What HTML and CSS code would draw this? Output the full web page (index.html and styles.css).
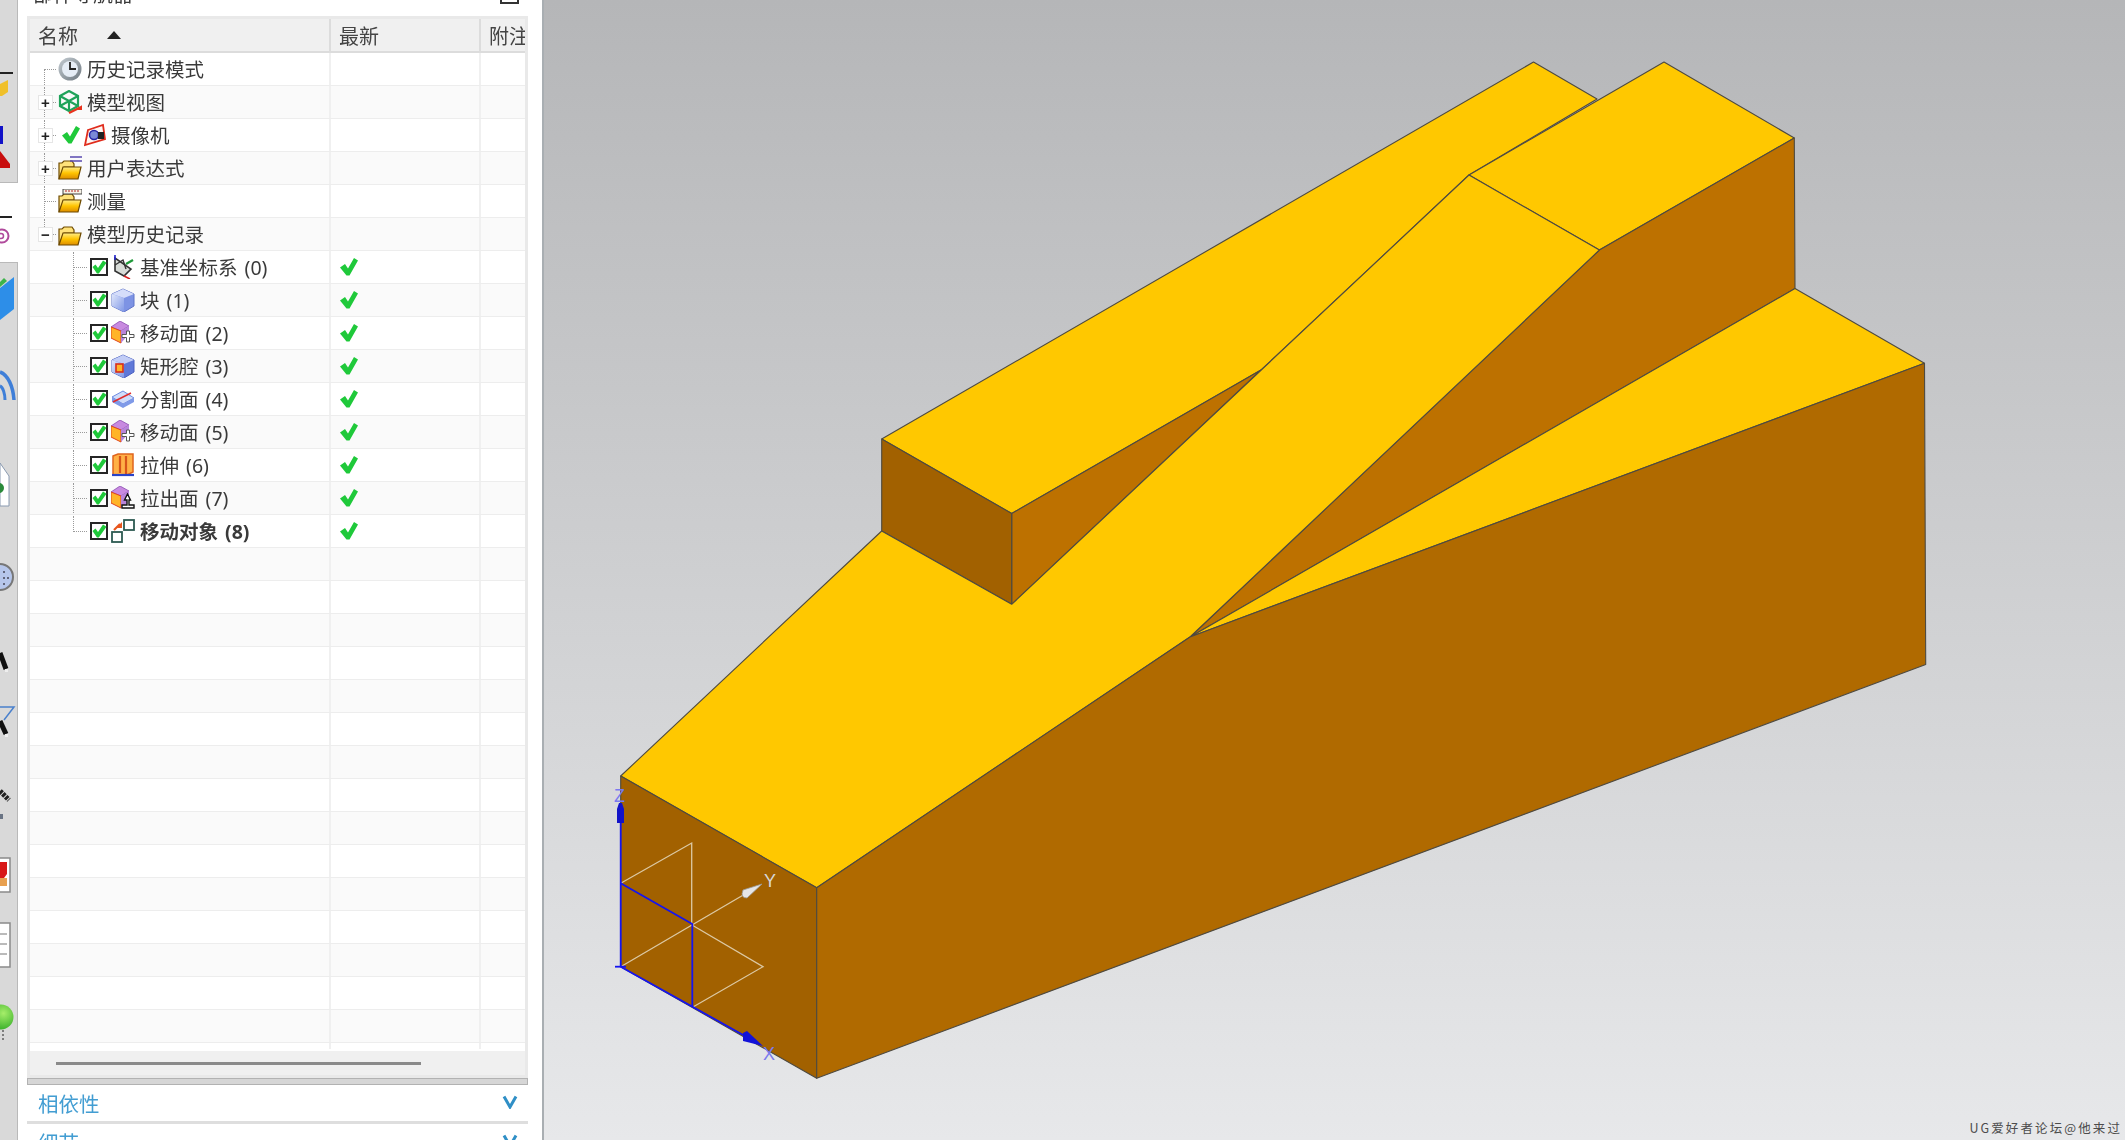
FILE: index.html
```html
<!DOCTYPE html>
<html lang="zh-CN">
<head>
<meta charset="utf-8">
<title>部件导航器</title>
<link rel="stylesheet" href="styles.css">
</head>
<body>
<svg class="defs" width="0" height="0" aria-hidden="true">
  <defs>
    <linearGradient id="gFolder" x1="0" y1="0" x2="0" y2="1"><stop offset="0" stop-color="#ffee8c"/><stop offset=".5" stop-color="#ffc400"/><stop offset="1" stop-color="#dc8c00"/></linearGradient>
    <linearGradient id="gBlue" x1="0" y1="0" x2="1" y2="1"><stop offset="0" stop-color="#dfe6fb"/><stop offset="1" stop-color="#7f97e6"/></linearGradient>
    <linearGradient id="gRim" x1="0" y1="0" x2="1" y2="1"><stop offset="0" stop-color="#c4ccd2"/><stop offset="1" stop-color="#6e7880"/></linearGradient>
    <radialGradient id="gBall" cx=".6" cy=".35" r=".8"><stop offset="0" stop-color="#a6ee6a"/><stop offset="1" stop-color="#25a51f"/></radialGradient>
    <symbol id="check" viewBox="0 0 18 18"><path d="M0 9.500 5 6l3 4.500L14 0l4 2.500L9.500 17.500h-3z" fill="#1fc93a"/></symbol>
    <symbol id="box" viewBox="0 0 18 18"><rect x="1" y="1" width="16" height="16" fill="#fff" stroke="#262626" stroke-width="2"/><path d="M2.500 9 5.500 6.500 8 10 13 2.500 16.500 4.800 8.800 15.500H7z" fill="#1fc93a"/></symbol>
    <symbol id="folder" viewBox="0 0 24 24"><path d="M1 23V7h3l2-2h8l2 3v3H6z" fill="#ffe27a" stroke="#6e4a00" stroke-width="1.200"/><path d="M1 23 5 11h18l-3 12z" fill="url(#gFolder)" stroke="#6e4a00" stroke-width="1.200"/></symbol>
    <symbol id="moveface" viewBox="0 0 24 24"><path d="M0 6 9 0l9 5-8 5z" fill="#c88ae0" stroke="#8a4cb0" stroke-width=".8"/><path d="M0 6l10 4v12L0 17z" fill="#ffb428" stroke="#e0431e"/><path d="M10 10l8-5v8l-8 9z" fill="#b884da"/><path d="M15.500 10h3v3.500H23v3h-4.500V21h-3v-4.500H11v-3h4.500z" fill="#fff" stroke="#555"/></symbol>
  </defs>
</svg>

<svg class="strip" width="18" height="1140" viewBox="0 0 18 1140" aria-hidden="true">
  <rect width="18" height="1140" fill="#d9d9d9"/>
  <rect x="17" width="1" height="1140" fill="#b9b9b9"/>
  <rect y="183" width="18" height="79" fill="#fff"/>
  <rect y="182" width="18" height="1" fill="#b9b9b9"/>
  <rect y="262" width="18" height="1" fill="#b9b9b9"/>
  <rect y="72" width="13" height="2" fill="#222"/>
  <path d="M0 84 8 80v12l-6 4H0z" fill="#f0c02a"/>
  <rect y="126" width="3" height="18" fill="#1212c8"/>
  <path d="M0 151 10 164v4H0z" fill="#c80e0e"/>
  <rect y="216" width="12" height="2" fill="#222"/>
  <circle cx="2" cy="236" r="6.500" fill="none" stroke="#b04a9c" stroke-width="2"/>
  <circle cx="1" cy="236" r="2.500" fill="none" stroke="#b04a9c" stroke-width="1.500"/>
  <path d="M0 288 14 277v32L0 320z" fill="#2d8ee8"/>
  <path d="M0 282l4-4 3 3-7 6z" fill="#3db44a"/>
  <path d="M0 372c8 3 13 14 14 28" fill="none" stroke="#3f7fd8" stroke-width="3.500"/>
  <path d="M0 386c3 1 5 8 5 14" fill="none" stroke="#3f7fd8" stroke-width="3"/>
  <path d="M0 463 9 476v30H0z" fill="#fff" stroke="#8a9ab0"/>
  <circle cx="-1" cy="488" r="5" fill="#2a8a3a"/>
  <circle cx="0" cy="577" r="13" fill="#b6c6ea" stroke="#777" stroke-width="2"/>
  <circle cx="4" cy="572" r="1" fill="#445"/><circle cx="4" cy="578" r="1" fill="#445"/><circle cx="8" cy="578" r="1" fill="#445"/><circle cx="4" cy="584" r="1" fill="#445"/>
  <path d="M0 653 6 669" stroke="#111" stroke-width="5"/>
  <rect x="5" y="669" width="3" height="3" fill="#eee"/>
  <path d="M0 707H14L4 720" fill="none" stroke="#4a80cc" stroke-width="1.500"/>
  <path d="M0 721 6 734" stroke="#111" stroke-width="5"/>
  <rect x="5" y="734" width="3" height="3" fill="#eee"/>
  <path d="M0 791 9 800" stroke="#222" stroke-width="5" stroke-dasharray="3 1"/>
  <rect y="814" width="3" height="5" fill="#6a7484"/>
  <rect x="-2" y="858" width="12" height="34" fill="#fff" stroke="#8a8a8a" stroke-width="1.500"/>
  <path d="M0 862h7v12l-3 4H0z" fill="#d81818"/>
  <path d="M0 878h7v8H0z" fill="#e8a050"/>
  <rect x="-2" y="923" width="12" height="44" fill="#fff" stroke="#8a8a8a" stroke-width="1.500"/>
  <path d="M0 934h7M0 944h7M0 954h7" stroke="#777"/>
  <circle cx="1" cy="1017" r="12.500" fill="url(#gBall)"/>
  <path d="M3 1030v11" stroke="#222" stroke-dasharray="2 2"/>
</svg>

<aside class="panel">
  <header class="title">
    <span>部件导航器</span>
    <span class="maximize"></span>
  </header>

  <div class="tree">
    <div class="head">
      <div class="hcell name">名称<span class="sort"></span></div>
      <div class="hcell">最新</div>
      <div class="hcell last">附注</div>
    </div>

    <div class="rows">
      <div class="row">
        <div class="cell main"><span class="twig t0 from-mid"></span>
          <svg class="ico" viewBox="0 0 24 24"><circle cx="12" cy="12" r="11.500" fill="url(#gRim)"/><circle cx="12" cy="12" r="8" fill="#e6edf6"/><path d="M12 5v7h6" fill="none" stroke="#222" stroke-width="1.800"/></svg>
          <span class="label">历史记录模式</span></div>
        <div class="cell"></div><div class="cell end"></div>
      </div>
      <div class="row">
        <div class="cell main"><span class="twig t0 full"><span class="exp">+</span></span>
          <svg class="ico" viewBox="0 0 24 24"><g fill="none" stroke="#1fa35a" stroke-width="2.200"><path d="M11 1 20 6v10l-9 5-9-5V6z"/><path d="M2 6l9 5 9-5M11 11v10M2 16l18-10M2 6l18 10"/></g><path d="M11 23 23 17" stroke="#e8331e" stroke-width="2.200"/><path d="M24 15v5h-5z" fill="#e8331e"/></svg>
          <span class="label">模型视图</span></div>
        <div class="cell"></div><div class="cell end"></div>
      </div>
      <div class="row">
        <div class="cell main"><span class="twig t0 full"><span class="exp">+</span></span>
          <svg class="chk-lead" viewBox="0 0 18 18"><use href="#check"/></svg>
          <svg class="cam" viewBox="0 0 22 24"><path d="M4 7 19 2l2 14-20 6z" fill="#fff6f2" stroke="#e02c1c" stroke-width="1.800"/><circle cx="10" cy="12" r="4.500" fill="#7a8ad8" stroke="#2828a8" stroke-width="1.500"/><rect x="14" y="9" width="6" height="7" fill="#222"/></svg>
          <span class="label cam-label">摄像机</span></div>
        <div class="cell"></div><div class="cell end"></div>
      </div>
      <div class="row">
        <div class="cell main"><span class="twig t0 full"><span class="exp">+</span></span>
          <svg class="ico" viewBox="0 0 24 24"><use href="#folder"/><path d="M12 1h12M12 5h12" stroke="#5a4ab0" stroke-width="1.600"/></svg>
          <span class="label">用户表达式</span></div>
        <div class="cell"></div><div class="cell end"></div>
      </div>
      <div class="row">
        <div class="cell main"><span class="twig t0 full"></span>
          <svg class="ico" viewBox="0 0 24 24"><use href="#folder"/><rect x="5" y="0" width="19" height="5" fill="#f6f2e6" stroke="#444"/><path d="M8 1v2M11 1v2M14 1v2M17 1v2M20 1v2" stroke="#b02020"/></svg>
          <span class="label">测量</span></div>
        <div class="cell"></div><div class="cell end"></div>
      </div>
      <div class="row">
        <div class="cell main"><span class="twig t0 to-mid"><span class="exp">−</span></span>
          <svg class="ico" viewBox="0 0 24 24"><use href="#folder"/></svg>
          <span class="label">模型历史记录</span></div>
        <div class="cell"></div><div class="cell end"></div>
      </div>

      <div class="row">
        <div class="cell main"><span class="twig t1 full"></span><svg class="cb"><use href="#box"/></svg>
          <svg class="ico2" viewBox="0 0 24 24"><path d="M4 3 4 16l9 5 7-7z" fill="#d8dcd8" stroke="#333" stroke-width="1.600"/><path d="M4 10l8-5 3 9" fill="none" stroke="#333" stroke-width="1.400"/><path d="M4 0v5" stroke="#2222cc" stroke-width="1.600"/><path d="M15 9l7-4" stroke="#1f9a3a" stroke-width="2.200"/><path d="M13 21l6 3" stroke="#d82020" stroke-width="1.600"/></svg>
          <span class="label">基准坐标系 (0)</span></div>
        <div class="cell ok"><svg class="ck"><use href="#check"/></svg></div><div class="cell end"></div>
      </div>
      <div class="row">
        <div class="cell main"><span class="twig t1 full"></span><svg class="cb"><use href="#box"/></svg>
          <svg class="ico2" viewBox="0 0 24 24"><path d="M1 6 12 1l11 5v12l-10 6L1 18z" fill="#7d93e4" stroke="#5f74c8"/><path d="M1 6l12 4 10-4L12 1z" fill="#d5ddfa"/><path d="M1 6l12 4v14L1 18z" fill="url(#gBlue)"/></svg>
          <span class="label">块 (1)</span></div>
        <div class="cell ok"><svg class="ck"><use href="#check"/></svg></div><div class="cell end"></div>
      </div>
      <div class="row">
        <div class="cell main"><span class="twig t1 full"></span><svg class="cb"><use href="#box"/></svg>
          <svg class="ico2" viewBox="0 0 24 24"><use href="#moveface"/></svg>
          <span class="label">移动面 (2)</span></div>
        <div class="cell ok"><svg class="ck"><use href="#check"/></svg></div><div class="cell end"></div>
      </div>
      <div class="row">
        <div class="cell main"><span class="twig t1 full"></span><svg class="cb"><use href="#box"/></svg>
          <svg class="ico2" viewBox="0 0 24 24"><path d="M1 6 12 1l11 5v12l-10 6L1 18z" fill="#5f78d8" stroke="#4a60c0"/><path d="M1 6l12 4 10-4L12 1z" fill="#c2cdf6"/><path d="M1 6l12 4v14L1 18z" fill="url(#gBlue)"/><rect x="5" y="10" width="7" height="8" fill="#ffb428" stroke="#d82c1c" stroke-width="1.600"/></svg>
          <span class="label">矩形腔 (3)</span></div>
        <div class="cell ok"><svg class="ck"><use href="#check"/></svg></div><div class="cell end"></div>
      </div>
      <div class="row">
        <div class="cell main"><span class="twig t1 full"></span><svg class="cb"><use href="#box"/></svg>
          <svg class="ico2" viewBox="0 0 24 24"><path d="M1 10 12 4l11 7-11 6z" fill="#cfdcfa" stroke="#6f8ae0"/><path d="M1 10v5l11 6 11-6v-4l-11 6z" fill="#7f9ae8"/><path d="M2 15 20 6" stroke="#e02c2c" stroke-width="1.500"/></svg>
          <span class="label">分割面 (4)</span></div>
        <div class="cell ok"><svg class="ck"><use href="#check"/></svg></div><div class="cell end"></div>
      </div>
      <div class="row">
        <div class="cell main"><span class="twig t1 full"></span><svg class="cb"><use href="#box"/></svg>
          <svg class="ico2" viewBox="0 0 24 24"><use href="#moveface"/></svg>
          <span class="label">移动面 (5)</span></div>
        <div class="cell ok"><svg class="ck"><use href="#check"/></svg></div><div class="cell end"></div>
      </div>
      <div class="row">
        <div class="cell main"><span class="twig t1 full"></span><svg class="cb"><use href="#box"/></svg>
          <svg class="ico2" viewBox="0 0 24 24"><path d="M2 3 7 1h15v18l-6 3H2z" fill="#ffb046" stroke="#e0641e" stroke-width="1.500"/><path d="M9 3v17M15 3v18" stroke="#d8541a" stroke-width="2.200"/><path d="M1 22h22" stroke="#2a44c8" stroke-width="2.200"/></svg>
          <span class="label">拉伸 (6)</span></div>
        <div class="cell ok"><svg class="ck"><use href="#check"/></svg></div><div class="cell end"></div>
      </div>
      <div class="row">
        <div class="cell main"><span class="twig t1 full"></span><svg class="cb"><use href="#box"/></svg>
          <svg class="ico2" viewBox="0 0 24 24"><path d="M0 6 9 0l9 5-8 5z" fill="#c88ae0" stroke="#8a4cb0" stroke-width=".8"/><path d="M0 6l10 4v12L0 17z" fill="#ffb428" stroke="#e0431e"/><path d="M10 10l8-5v11l-8 6z" fill="#b884da"/><path d="M16.500 8l3 6H18v5h5v3H11v-3h5v-5h-2.500z" fill="#fff" stroke="#111" stroke-width="1.400"/></svg>
          <span class="label">拉出面 (7)</span></div>
        <div class="cell ok"><svg class="ck"><use href="#check"/></svg></div><div class="cell end"></div>
      </div>
      <div class="row">
        <div class="cell main"><span class="twig t1 to-mid"></span><svg class="cb"><use href="#box"/></svg>
          <svg class="ico2" viewBox="0 0 24 24"><rect x="13" y="1" width="10" height="10" fill="#fff" stroke="#2d5a52" stroke-width="1.800"/><rect x="1" y="13" width="10" height="10" fill="#fff" stroke="#2d5a52" stroke-width="1.800"/><path d="M3 11 9 5" stroke="#e8561e" stroke-width="2.200"/><path d="M11 3v6H5z" fill="#e8561e"/></svg>
          <span class="label strong">移动对象 (8)</span></div>
        <div class="cell ok"><svg class="ck"><use href="#check"/></svg></div><div class="cell end"></div>
      </div>

      <div class="row"><div class="cell main"></div><div class="cell"></div><div class="cell end"></div></div>
      <div class="row"><div class="cell main"></div><div class="cell"></div><div class="cell end"></div></div>
      <div class="row"><div class="cell main"></div><div class="cell"></div><div class="cell end"></div></div>
      <div class="row"><div class="cell main"></div><div class="cell"></div><div class="cell end"></div></div>
      <div class="row"><div class="cell main"></div><div class="cell"></div><div class="cell end"></div></div>
      <div class="row"><div class="cell main"></div><div class="cell"></div><div class="cell end"></div></div>
      <div class="row"><div class="cell main"></div><div class="cell"></div><div class="cell end"></div></div>
      <div class="row"><div class="cell main"></div><div class="cell"></div><div class="cell end"></div></div>
      <div class="row"><div class="cell main"></div><div class="cell"></div><div class="cell end"></div></div>
      <div class="row"><div class="cell main"></div><div class="cell"></div><div class="cell end"></div></div>
      <div class="row"><div class="cell main"></div><div class="cell"></div><div class="cell end"></div></div>
      <div class="row"><div class="cell main"></div><div class="cell"></div><div class="cell end"></div></div>
      <div class="row"><div class="cell main"></div><div class="cell"></div><div class="cell end"></div></div>
      <div class="row"><div class="cell main"></div><div class="cell"></div><div class="cell end"></div></div>
      <div class="row"><div class="cell main"></div><div class="cell"></div><div class="cell end"></div></div>
      <div class="row"><div class="cell main"></div><div class="cell"></div><div class="cell end"></div></div>
    </div>

    <div class="hscroll"><span class="thumb"></span></div>
  </div>

  <div class="splitter"></div>

  <section class="fold">
    <span>相依性</span>
    <svg class="chev" viewBox="0 0 16 14"><path d="M2 1.500 8 12 14 1.500" fill="none" stroke="#2f8fc6" stroke-width="3"/></svg>
  </section>
  <section class="fold">
    <span>细节</span>
    <svg class="chev" viewBox="0 0 16 14"><path d="M2 1.500 8 12 14 1.500" fill="none" stroke="#2f8fc6" stroke-width="3"/></svg>
  </section>
</aside>

<main class="view">
  <svg class="model" width="1581" height="1140" viewBox="544 0 1581 1140" aria-hidden="true">
    <g stroke="#4e4a40" stroke-width="1.100" stroke-linejoin="round">
      <polygon fill="#ffc800" points="881.700,439 1533.500,62 1597,99 1469,175 1261,370 1011.700,513.500"/>
      <polygon fill="#bd7100" points="1011.700,513.500 1261,370 1011.700,604.300"/>
      <polygon fill="#a26100" points="881.700,439 1011.700,513.500 1011.700,604.300 881.700,531"/>
      <polygon fill="#ffc800" points="1469,175 1664,62 1794.300,138 1599.400,250"/>
      <polygon fill="#bd7100" points="1599.400,250 1794.300,138 1795,288.500 1190,637"/>
      <polygon fill="#ffc800" points="1190,637 1795,288.500 1924.500,363.300"/>
      <polygon fill="#ffc800" points="620.700,776 881.700,531 1011.700,604.300 1469,175 1599.400,250 1190,637 816.700,887.700"/>
      <polygon fill="#a26100" points="620.700,776 816.700,887.700 816.700,1078.300 620.700,966.700"/>
      <polygon fill="#b06a00" points="816.700,887.700 1190,637 1924.500,363.300 1925.700,664.500 816.700,1078.300"/>
    </g>
    <g fill="none" stroke="#dcc9a4" stroke-width="1.300">
      <path d="M620.700 883.300 691.700 843V924"/>
      <path d="M620.700 966.700 692 925 745 894"/>
      <path d="M692 925 763 966.700 693 1007"/>
    </g>
    <g fill="none" stroke="#1414f0" stroke-width="1.800">
      <path d="M620.700 966.700V805"/>
      <path d="M620.700 883.300 692.300 924V1006.700"/>
      <path d="M620.700 966.700 745 1036"/>
      <path d="M615 966.700h11"/>
    </g>
    <path d="M617 823v-14l2-6h3l2 6v14z" fill="#1212c8"/>
    <path d="M743 1033l4-2 16 15-20-5z" fill="#1212d8"/>
    <path d="M743 890l19-6-15 14q-7 0-4-8z" fill="#e6e6e6" stroke="#9a9a9a" stroke-width=".8"/>
    <text class="axis axis-z" x="614" y="802">Z</text>
    <text class="axis axis-z" x="763" y="1060">X</text>
    <text class="axis axis-y" x="764" y="887">Y</text>
  </svg>
  <div class="mark">UG爱好者论坛@他来过</div>
</main>
</body>
</html>
```

FILE: styles.css
```css
html, body {
  margin: 0;
  height: 1140px;
  overflow: hidden;
}
body {
  display: flex;
  width: 2125px;
  background: #fff;
  font-family: "Noto Sans", "Noto Sans CJK SC", sans-serif;
  color: #3a3a3a;
}
.defs { position: absolute; }
.strip {
  flex: none;
  display: block;
  filter: blur(.5px);
}

/* navigator panel */
.panel {
  flex: none;
  width: 524px;
  height: 1140px;
  border-right: 2px solid #a9aeb2;
  background: #fff;
  overflow: hidden;
  display: flex;
  flex-direction: column;
  filter: blur(.4px);
}
.title {
  flex: none;
  height: 36px;
  margin-top: -20px;
  padding: 0 23px 6px 15px;
  display: flex;
  justify-content: space-between;
  align-items: center;
  font-size: 20px;
  line-height: 30px;
  box-sizing: border-box;
}
.maximize {
  width: 19px;
  height: 18px;
  box-sizing: border-box;
  border: 2px solid #333;
}
.tree {
  flex: none;
  box-sizing: border-box;
  width: 501px;
  height: 1062px;
  margin-left: 9px;
  border: 3px solid #e9e9e9;
  display: flex;
  flex-direction: column;
}
.head {
  flex: none;
  height: 34px;
  box-sizing: border-box;
  display: grid;
  grid-template-columns: 301px 150px 44px;
  background: #f0f0f0;
  border-bottom: 2px solid #dcdcdc;
  font-size: 20px;
  color: #444;
}
.hcell {
  display: flex;
  align-items: center;
  padding-left: 8px;
  border-right: 2px solid #dcdcdc;
  white-space: nowrap;
  overflow: hidden;
}
.hcell.last { border-right: 0; }
.sort {
  margin-left: 29px;
  width: 0;
  height: 0;
  border-left: 7px solid transparent;
  border-right: 7px solid transparent;
  border-bottom: 8px solid #222;
}
.rows {
  flex: 1;
  min-height: 0;
  overflow: hidden;
  margin-bottom: 2px;
}
.row {
  height: 33px;
  box-sizing: border-box;
  display: grid;
  grid-template-columns: 301px 150px 44px;
  border-bottom: 1px solid #ededed;
  background: #fff;
}
.row:nth-child(even) { background: #fafafa; }
.cell {
  display: flex;
  align-items: center;
  border-right: 2px solid #f0f0f0;
  min-width: 0;
}
.cell.end { border-right: 0; }
.cell.ok { padding-left: 9px; }
.label {
  font-size: 19.500px;
  word-spacing: 2px;
  white-space: nowrap;
  margin-left: 5px;
  padding-bottom: 2px;
}
.label.strong { font-weight: 700; }

.ico { flex: none; width: 24px; height: 24px; }
.ico2 { flex: none; width: 24px; height: 24px; margin-left: 3px; margin-right: 0; }
.cam { flex: none; width: 22px; height: 24px; margin-left: 4px; }
.chk-lead { flex: none; width: 18px; height: 18px; margin-left: 4px; }
.cb { flex: none; width: 18px; height: 18px; }
.ck { flex: none; width: 18px; height: 18px; }

/* dotted tree guides */
.twig {
  flex: none;
  position: relative;
  align-self: stretch;
  display: block;
}
.twig.t0 { width: 28px; }
.twig.t1 { width: 60px; }
.twig::before {
  content: "";
  position: absolute;
  width: 0;
  border-left: 1px dotted #9a9a9a;
}
.twig.t0::before { left: 14px; }
.twig.t1::before { left: 43px; }
.twig.full::before { top: 1px; bottom: 1px; }
.twig.to-mid::before { top: 1px; height: 16px; }
.twig.from-mid::before { top: 16px; bottom: 0; }
.twig::after {
  content: "";
  position: absolute;
  top: 16px;
  height: 0;
  border-top: 1px dotted #9a9a9a;
}
.twig.t0::after { left: 14px; width: 12px; }
.twig.t1::after { left: 43px; width: 14px; }
.exp {
  position: absolute;
  z-index: 1;
  left: 8px;
  top: 9px;
  width: 13px;
  height: 13px;
  border: 1px solid #e6e6e6;
  background: #fff;
  font: 700 15px/13px "Liberation Sans", sans-serif;
  color: #222;
  text-align: center;
}

.hscroll {
  flex: none;
  height: 24px;
  box-sizing: border-box;
  padding: 11px 0 0 26px;
  background: #f0f0f0;
}
.thumb {
  display: block;
  width: 365px;
  height: 3px;
  background: #8a8a8a;
}

.splitter {
  flex: none;
  width: 501px;
  height: 7px;
  box-sizing: border-box;
  margin-left: 9px;
  background: #d6d6d6;
  border: 1px solid #b2b2b2;
}
.fold {
  flex: none;
  width: 501px;
  height: 39px;
  box-sizing: border-box;
  margin-left: 9px;
  padding: 0 10px 0 11px;
  border-bottom: 3px solid #dedede;
  display: flex;
  justify-content: space-between;
  align-items: center;
  font-size: 20.500px;
  color: #429dd2;
}
.chev { width: 16px; height: 14px; margin-top: -3px; }

/* 3D viewport */
.view {
  flex: 1;
  position: relative;
  height: 1140px;
  overflow: hidden;
  background: linear-gradient(180deg, #b5b6b8 0%, #e7e8ea 100%);
}
.model {
  position: absolute;
  inset: 0;
  display: block;
}
.axis {
  font-family: "Liberation Sans", sans-serif;
  font-size: 18px;
}
.axis-z { fill: #7a7aee; }
.axis-y { fill: #d8d8d8; }
.mark {
  position: absolute;
  right: 3px;
  bottom: 4px;
  font-family: "Noto Sans CJK SC", sans-serif;
  font-size: 12.500px;
  line-height: 16px;
  letter-spacing: 2.100px;
  color: #4c4c4c;
  white-space: nowrap;
}
```
